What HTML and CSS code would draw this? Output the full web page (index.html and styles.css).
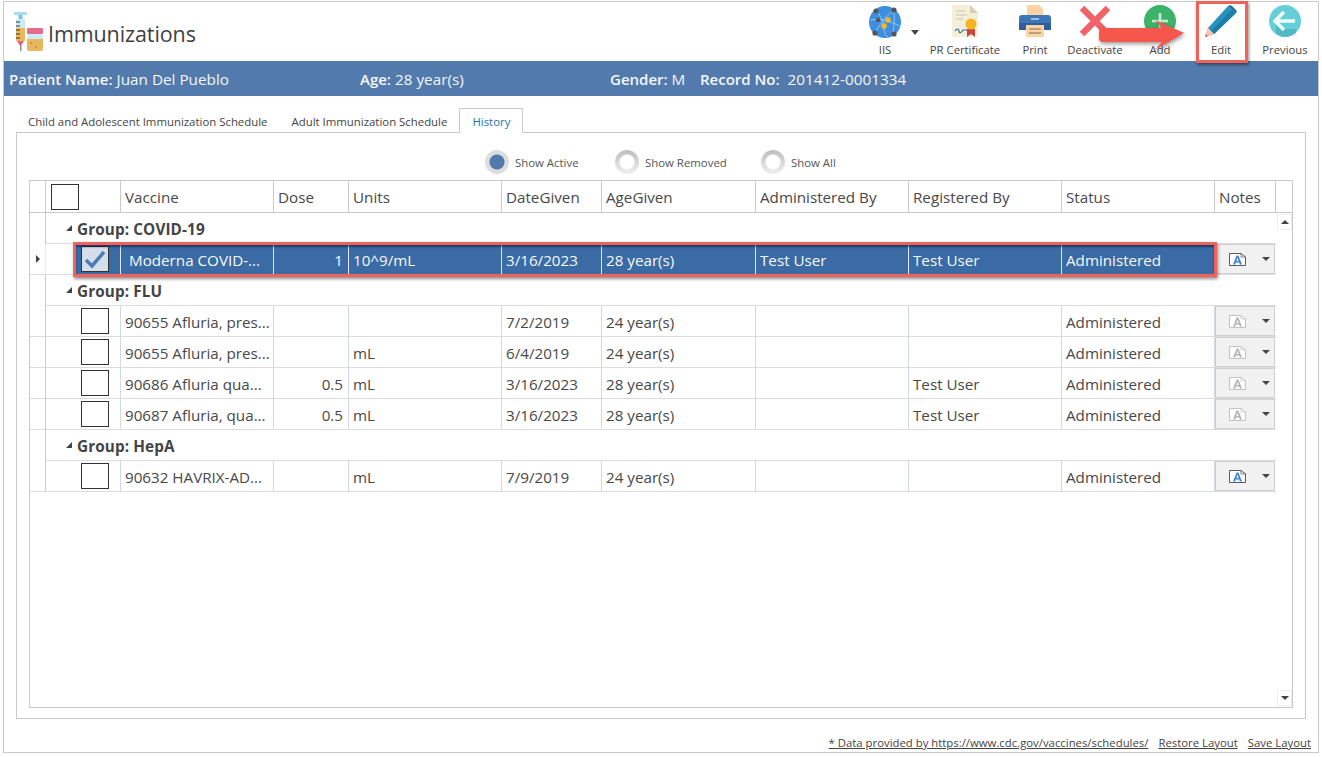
FILE: index.html
```html
<!DOCTYPE html>
<html lang="en">
<head>
<meta charset="utf-8">
<title>Immunizations</title>
<link rel="stylesheet" href="styles.css">
</head>
<body>
<svg class="defs" width="0" height="0" aria-hidden="true">
  <defs>
    <symbol id="note" viewBox="0 0 17 13">
      <path d="M.5.5H12L16.5 4V12.5H.5Z" fill="#fff" stroke="currentColor" stroke-width=".8"/>
      <path d="M12 .5V4H16.5" fill="none" stroke="currentColor" stroke-width=".6"/>
      <path d="M4 11.5 7.6 2.5H9.4L13 11.5H10.8L10.2 9.5H6.8L6.2 11.5ZM7.4 8H9.6L8.5 4.6Z" fill="var(--note-a)"/>
    </symbol>
  </defs>
</svg>
<div class="app">
  <header class="top">
    <div class="title">
      <svg class="title-icon" width="33" height="40" viewBox="0 0 33 40">
        <rect x="3" y="0" width="13" height="3" fill="#a9def0"/>
        <rect x="7.500" y="3" width="4" height="4" fill="#7cc4de"/>
        <path d="M5 7H14V29H5Z" fill="#cfeaf4"/>
        <path d="M5 16H14V29H5Z" fill="#eab95c"/>
        <path d="M5 10h4M5 14h4M5 18h4M5 22h4M5 26h4" stroke="#333" stroke-width="1.200"/>
        <path d="M6 29H13L10.500 33H8.500Z" fill="#e85d86"/>
        <rect x="9" y="33" width="1.400" height="6" fill="#888"/>
        <rect x="16" y="16" width="16" height="6" rx="1" fill="#e96b8c"/>
        <path d="M17 22H31L32 25V37Q32 39 30 39H18Q16 39 16 37V25Z" fill="#cfeaf4"/>
        <path d="M16 27H32V37Q32 39 30 39H18Q16 39 16 37Z" fill="#e8b85e"/>
        <circle cx="20" cy="31" r="1" fill="#c98a2e"/>
        <circle cx="25" cy="35" r="1" fill="#c98a2e"/>
      </svg>
      <h1>Immunizations</h1>
    </div>
    <nav class="toolbar">
      <button class="tool tool-iis">
        <svg width="32" height="34" viewBox="0 0 32 34">
          <circle cx="16" cy="17" r="16" fill="#3f8fe0"/>
          <path d="M7 6 Q15 14 15 22 T19 32M25 6Q16 10 6 28M1 15Q14 12 31 21M25 5Q26 18 24 29" fill="none" stroke="#8cc4f2" stroke-width="1"/>
          <circle cx="7" cy="6" r="2.600" fill="#555"/><circle cx="25" cy="5" r="2.600" fill="#555"/>
          <circle cx="6" cy="28" r="2.600" fill="#555"/><circle cx="25" cy="29" r="2.600" fill="#555"/>
          <circle cx="9" cy="15" r="2.200" fill="#555"/>
          <circle cx="19" cy="15" r="2.800" fill="#f5b81f"/><circle cx="15" cy="21" r="2.800" fill="#f5b81f"/>
        </svg>
        <span class="tool-caret"></span>
        <span class="tool-label">IIS</span>
      </button>
      <button class="tool tool-pr">
        <svg width="26" height="32" viewBox="0 0 26 32">
          <path d="M0 0H18L26 8V32H0Z" fill="#f3efd9"/>
          <path d="M18 0L26 8H18Z" fill="#d5cfae"/>
          <path d="M4 6H13M4 10H15M4 14H11" stroke="#d9d3b8" stroke-width="1.500"/>
          <path d="M3 26Q6 22 7 26T11 25H15" fill="none" stroke="#3b6fb0" stroke-width="1.200"/>
          <path d="M15 24H23V32L19 29 15 32Z" fill="#c9473f"/>
          <circle cx="19" cy="19" r="5.500" fill="#f4b51f"/>
        </svg>
        <span class="tool-label">PR Certificate</span>
      </button>
      <button class="tool tool-print">
        <svg width="32" height="32" viewBox="0 0 32 32">
          <path d="M8 0H20L24 4V12H8Z" fill="#fbd3a5"/>
          <path d="M3 10H29Q32 10 32 13V25H0V13Q0 10 3 10Z" fill="#3d76b6"/>
          <rect x="0" y="18" width="32" height="7" fill="#2f5f9a"/>
          <path d="M7 20H25V32H7Z" fill="#fbd3a5"/>
          <path d="M10 24H22M10 28H22" stroke="#8a6d4f" stroke-width="1.200"/>
          <path d="M12 14H20" stroke="#bcd6f0" stroke-width="1.500"/>
        </svg>
        <span class="tool-label">Print</span>
      </button>
      <button class="tool tool-deact">
        <svg width="32" height="32" viewBox="0 0 32 32">
          <path d="M3 3 29 29M29 3 3 29" stroke="#f0636b" stroke-width="6.500"/>
        </svg>
        <span class="tool-label">Deactivate</span>
      </button>
      <button class="tool tool-add">
        <svg width="32" height="32" viewBox="0 0 32 32">
          <circle cx="16" cy="16" r="16" fill="#3cb368"/>
          <path d="M16 8V24M8 16H24" stroke="#c9ecd6" stroke-width="2.500"/>
        </svg>
        <span class="tool-label">Add</span>
      </button>
      <button class="tool tool-edit">
        <svg width="32" height="32" viewBox="0 0 32 32">
          <path d="M23 1 31 8 9 29 0 32 3 23Z" fill="#2793bd"/>
          <path d="M27 4.500 31 8 9 29 6 26Z" fill="#1c7ea6"/>
          <path d="M23 1Q25-.5 27 1L31 5Q32.500 7 31 8Z" fill="#1b6f96"/>
          <path d="M3 23 9 29 0 32Z" fill="#f7c9b5"/>
          <path d="M1 29 3 31 0 32Z" fill="#e8546a"/>
        </svg>
        <span class="tool-label">Edit</span>
      </button>
      <button class="tool tool-prev">
        <svg width="32" height="32" viewBox="0 0 32 32">
          <circle cx="16" cy="16" r="16" fill="#65cfd8"/>
          <path d="M7 16 15 24H27V28Q21 32 16 32 10 32 7 28Z" fill="#4eb3bf" opacity=".8"/>
          <path d="M15 7 6 16 15 25M7 16H26" fill="none" stroke="#f2fbfc" stroke-width="3.500"/>
        </svg>
        <span class="tool-label">Previous</span>
      </button>
    </nav>
  </header>

  <section class="patient">
    <span class="field field-name"><b>Patient Name:</b> Juan Del Pueblo</span>
    <span class="field field-age"><b>Age:</b> 28 year(s)</span>
    <span class="field field-gender"><b>Gender:</b> M</span>
    <span class="field"><b>Record No:</b>&nbsp; 201412-0001334</span>
  </section>

  <div class="tabs">
    <a class="tab">Child and Adolescent Immunization Schedule</a>
    <a class="tab">Adult Immunization Schedule</a>
    <a class="tab tab-active">History</a>
  </div>

  <main class="panel">
    <div class="filters">
      <label class="radio radio-on"><i></i>Show Active</label>
      <label class="radio radio-removed"><i></i>Show Removed</label>
      <label class="radio"><i></i>Show All</label>
    </div>

    <div class="grid">
      <div class="row head">
        <div class="c ind"></div>
        <div class="c chk"><span class="box"></span></div>
        <div class="c">Vaccine</div><div class="c">Dose</div><div class="c">Units</div><div class="c">DateGiven</div>
        <div class="c">AgeGiven</div><div class="c">Administered By</div><div class="c">Registered By</div><div class="c">Status</div><div class="c">Notes</div>
      </div>
      <div class="body">
        <div class="scroll"><span class="sb sb-up"></span><span class="sb sb-down"></span></div>

        <div class="group"><span class="expander"></span>Group: COVID-19</div>
        <div class="row selected">
          <div class="c ind"><span class="pointer"></span></div>
          <div class="c chk"><span class="box box-on">
            <svg width="22" height="20" viewBox="0 0 22 20"><path d="M2 11 8 17 20 3" fill="none" stroke="#4d7cb5" stroke-width="3.500"/></svg>
          </span></div>
          <div class="c vac-sel">Moderna COVID-...</div><div class="c num">1</div><div class="c">10^9/mL</div><div class="c">3/16/2023</div>
          <div class="c">28 year(s)</div><div class="c">Test User</div><div class="c">Test User</div><div class="c">Administered</div>
          <div class="c note-cell"><span class="note-btn"><svg class="note-ic" width="17" height="13"><use href="#note"/></svg><span class="note-caret"></span></span></div>
        </div>

        <div class="group"><span class="expander"></span>Group: FLU</div>
        <div class="row">
          <div class="c ind"></div><div class="c chk"><span class="box"></span></div>
          <div class="c">90655 Afluria, pres...</div><div class="c num"></div><div class="c"></div><div class="c">7/2/2019</div>
          <div class="c">24 year(s)</div><div class="c"></div><div class="c"></div><div class="c">Administered</div>
          <div class="c note-cell"><span class="note-btn note-off"><svg class="note-ic" width="17" height="13"><use href="#note"/></svg><span class="note-caret"></span></span></div>
        </div>
        <div class="row">
          <div class="c ind"></div><div class="c chk"><span class="box"></span></div>
          <div class="c">90655 Afluria, pres...</div><div class="c num"></div><div class="c">mL</div><div class="c">6/4/2019</div>
          <div class="c">24 year(s)</div><div class="c"></div><div class="c"></div><div class="c">Administered</div>
          <div class="c note-cell"><span class="note-btn note-off"><svg class="note-ic" width="17" height="13"><use href="#note"/></svg><span class="note-caret"></span></span></div>
        </div>
        <div class="row">
          <div class="c ind"></div><div class="c chk"><span class="box"></span></div>
          <div class="c">90686 Afluria qua...</div><div class="c num">0.5</div><div class="c">mL</div><div class="c">3/16/2023</div>
          <div class="c">28 year(s)</div><div class="c"></div><div class="c">Test User</div><div class="c">Administered</div>
          <div class="c note-cell"><span class="note-btn note-off"><svg class="note-ic" width="17" height="13"><use href="#note"/></svg><span class="note-caret"></span></span></div>
        </div>
        <div class="row">
          <div class="c ind"></div><div class="c chk"><span class="box"></span></div>
          <div class="c">90687 Afluria, qua...</div><div class="c num">0.5</div><div class="c">mL</div><div class="c">3/16/2023</div>
          <div class="c">28 year(s)</div><div class="c"></div><div class="c">Test User</div><div class="c">Administered</div>
          <div class="c note-cell"><span class="note-btn note-off"><svg class="note-ic" width="17" height="13"><use href="#note"/></svg><span class="note-caret"></span></span></div>
        </div>

        <div class="group"><span class="expander"></span>Group: HepA</div>
        <div class="row">
          <div class="c ind"></div><div class="c chk"><span class="box"></span></div>
          <div class="c">90632 HAVRIX-AD...</div><div class="c num"></div><div class="c">mL</div><div class="c">7/9/2019</div>
          <div class="c">24 year(s)</div><div class="c"></div><div class="c"></div><div class="c">Administered</div>
          <div class="c note-cell"><span class="note-btn"><svg class="note-ic" width="17" height="13"><use href="#note"/></svg><span class="note-caret"></span></span></div>
        </div>
      </div>
    </div>
  </main>

  <footer class="foot">
    <a>* Data provided by https://www.cdc.gov/vaccines/schedules/</a>
    <a>Restore Layout</a>
    <a>Save Layout</a>
  </footer>

  <div class="callout-edit"></div>
  <svg class="callout-arrow" width="96" height="38" viewBox="0 0 96 38">
    <path d="M5 9H64L57 1 86 14 57 31 64 23H5Q1 23 1 19V13Q1 9 5 9Z" fill="#f5574d"/>
  </svg>
  <div class="callout-row"></div>
</div>
</body>
</html>
```
FILE: styles.css
```css
* { box-sizing: border-box; }
html, body { margin: 0; padding: 0; background: #fff; }
body { font-family: "Open Sans", "Noto Sans", sans-serif; color: #444; overflow: hidden; }
.defs { position: absolute; }

.app {
  position: relative;
  width: 1316px;
  height: 752px;
  margin: 1px 0 0 3px;
  border: 1px solid #c9c9c9;
  display: flex;
  flex-direction: column;
}

/* header */
.top { height: 59px; display: flex; justify-content: space-between; flex: none; }
.title { display: flex; align-items: flex-start; }
.title-icon { margin: 10px 0 0 7px; }
.title h1 { margin: 15px 0 0 4px; font-size: 21.500px; line-height: 33px; font-weight: 400; color: #3f3f3f; letter-spacing: -.1px; }
.toolbar { display: flex; margin-right: -1px; }
.tool {
  position: relative;
  display: flex;
  flex-direction: column;
  align-items: center;
  height: 59px;
  padding: 3px 0 0;
  border: 0;
  background: none;
  font: inherit;
  color: inherit;
}
.tool svg { flex: none; }
.tool-label { position: absolute; left: -10px; right: -10px; top: 40px; font-size: 11.300px; line-height: 16px; text-align: center; color: #444; white-space: nowrap; }
.tool-iis { width: 66px; }
.tool-pr { width: 94px; }
.tool-print { width: 46px; }
.tool-deact { width: 74px; }
.tool-add { width: 56px; }
.tool-edit { width: 54px; margin-left: 6px; }
.tool-prev { width: 68px; margin-left: 3px; }
.tool-caret { position: absolute; left: 59px; top: 28px; border: 4px solid transparent; border-top: 5px solid #444; border-bottom: 0; }

/* patient bar */
.patient {
  height: 35px;
  flex: none;
  background: #527aad;
  color: #f4f7fb;
  display: flex;
  align-items: center;
  padding: 1px 0 0 5px;
  font-size: 15.300px;
}
.field { white-space: nowrap; }
.field b { font-weight: 600; font-size: 15px; }
.field-name { width: 351px; }
.field-age { width: 250px; }
.field-gender { width: 90px; }

/* tabs */
.tabs { display: flex; height: 25px; margin: 12px 0 0 12px; flex: none; position: relative; z-index: 1; font-size: 11.400px; }
.tab { display: flex; align-items: center; padding: 2px 12px 0; line-height: 14px; white-space: nowrap; color: #444; }
.tab-active { border: 1px solid #c9c9c9; border-bottom: 0; background: #fff; color: #1f72b8; padding: 2px 12px 0; }

.panel {
  width: 1290px;
  height: 587px;
  margin: -1px 0 0 12px;
  border: 1px solid #c9c9c9;
  flex: none;
  padding: 0 12px;
  display: flex;
  flex-direction: column;
}
.filters { height: 47px; flex: none; display: flex; padding-left: 456px; padding-top: 16px; font-size: 11.400px; }
.radio { display: flex; align-items: center; height: 26px; width: 130px; color: #555; white-space: nowrap; }
.radio-on { width: 130px; }
.radio-removed { width: 146px; }
.radio i {
  width: 24px;
  height: 24px;
  margin-right: 6px;
  border-radius: 50%;
  background: radial-gradient(circle, #fff 0 7px, transparent 8px), linear-gradient(#bdbdbd, #f0f0f0);
  flex: none;
}
.radio-on i { background: radial-gradient(circle, #527aad 0 7px, #dedede 8px), linear-gradient(#bdbdbd, #f0f0f0); }

/* grid */
.grid { width: 1264px; height: 528px; border: 1px solid #c9c9c9; flex: none; display: flex; flex-direction: column; font-size: 15.200px; }
.row {
  display: grid;
  grid-template-columns: 16px 75px 153px 75px 153px 100px 154px 153px 153px 153px 61px;
  height: 31px;
  border-bottom: 1px solid #dcdcdc;
  width: 1246px;
}
.c { display: flex; align-items: center; padding: 1px 4px 0; border-right: 1px solid #cfdae4; white-space: nowrap; overflow: hidden; color: #484848; min-width: 0; }
.num { justify-content: flex-end; padding-right: 5px; }
.ind { padding: 0; border-right: 1px solid #c9c9c9; }
.chk { justify-content: flex-start; padding: 0 0 0 35px; }
.head { height: 32px; width: 100%; border-bottom: 1px solid #c9c9c9; position: relative; }
.head .c { border-right-color: #c9c9c9; }
.head .chk { padding: 0 0 0 5px; }
.head .c:last-child { border-right: 1px solid #c9c9c9; }
.body { flex: 1; position: relative; background: linear-gradient(#c9c9c9, #c9c9c9) 15px 0 / 1px 278px no-repeat; }
.group {
  height: 31px;
  width: 1246px;
  padding: 1px 0 0 47px;
  position: relative;
  display: flex;
  align-items: center;
  font-weight: 700;
  font-size: 15.300px;
  letter-spacing: .1px;
  color: #444;
  background: linear-gradient(#dcdcdc, #dcdcdc) 16px 100% / 100% 1px no-repeat;
}
.expander { position: absolute; left: 36px; top: 12px; border-left: 6px solid transparent; border-bottom: 6px solid #444; }
.box { display: block; width: 28px; height: 26px; border: 1px solid #333; background: #fff; }
.box-on { background: #d5dfec; padding: 2px; }
.box-on svg { display: block; }
.pointer { display: block; margin-left: 6px; border-top: 4px solid transparent; border-bottom: 4px solid transparent; border-left: 4px solid #444; }

.selected { position: relative; }
.selected .c { background: #3a6ba5; color: #f7f9fc; border-right-color: #dfe8f2; }
.selected .ind { background: #fff; }
.selected .chk { background: linear-gradient(90deg, #fff 30px, #3a6ba5 30px); }
.selected .c.note-cell { background: #fff; border-right: 0; }
.vac-sel { padding-left: 8px; }
.note-cell { padding: 0; border-right: 0; }
.note-btn { display: flex; align-items: center; width: 60px; height: 30px; background: #f1f1f1; border: 1px solid #d0d0d0; border-left: 1px solid #c3cfdc; padding-left: 13px; --note-a: #3d85d8; color: #333; }
.note-off { color: #b5b5b5; --note-a: #b5b5b5; }
.note-caret { margin-left: 16px; border: 4px solid transparent; border-top: 4px solid #444; border-bottom: 0; }

.scroll { position: absolute; right: 0; top: 0; bottom: 0; width: 16px; }
.sb { position: absolute; left: 1px; width: 15px; height: 16px; border: 1px solid #eee; background: #fff; }
.sb::after { content: ""; position: absolute; left: 3px; top: 5px; border: 4px solid transparent; }
.sb-up { top: 1px; }
.sb-up::after { border-bottom: 4px solid #444; border-top: 0; }
.sb-down { bottom: 1px; }
.sb-down::after { border-top: 4px solid #444; border-bottom: 0; }

/* footer */
.foot { flex: 1; display: flex; justify-content: flex-end; align-items: flex-end; gap: 10px; padding: 0 7px 2px 0; font-size: 11.350px; line-height: 15px; }
.foot a { text-decoration: underline; color: #444; white-space: nowrap; }

/* annotations laid over the screenshot */
.callout-edit { position: absolute; left: 1192px; top: -1px; width: 52px; height: 62px; border: 3px solid #f0625a; box-shadow: 1px 2px 3px rgba(0,0,0,.45); }
.callout-arrow { position: absolute; left: 1094px; top: 17px; filter: drop-shadow(1px 2px 2px rgba(0,0,0,.4)); }
.callout-row { position: absolute; left: 69px; top: 240px; width: 1144px; height: 35px; border: 3px solid #f0625a; box-shadow: inset 0 2px 2px rgba(0,20,60,.55), 1px 2px 3px rgba(0,0,0,.45); }
```
